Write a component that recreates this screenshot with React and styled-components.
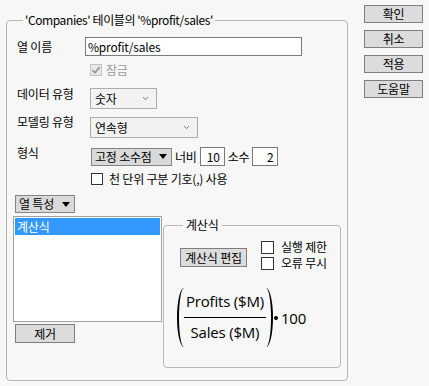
import React from 'react';
import styled, { createGlobalStyle } from 'styled-components';

const GlobalStyle = createGlobalStyle`
	html, body {
		margin: 0;
		padding: 0;
		background: #f7f7f7;
	}
	body {
		font-family: "Noto Sans CJK KR", "Noto Sans", sans-serif;
		font-size: 12px;
		letter-spacing: -0.2px;
		color: #000;
	}
`;

const Page = styled.div`
	display: flex;
	align-items: flex-start;
	width: 429px;
	height: 386px;
	padding-left: 6px;
	box-sizing: border-box;
	overflow: hidden;
`;

const GroupBox = styled.fieldset`
	box-sizing: border-box;
	width: 342px;
	min-width: 0;
	margin: 12px 0 0 0;
	padding: 9px 6px 12px 10px;
	border: 1px solid #b4b4b4;
	border-radius: 4px;
`;

const Legend = styled.legend`
	margin-left: 6px;
	padding: 0 2px;
	line-height: 16px;
	letter-spacing: -0.4px;
	white-space: nowrap;
`;

const Row = styled.div`
	display: flex;
	align-items: ${({ $center }) => ($center ? 'center' : 'flex-start')};
	margin-top: ${({ $top }) => $top || 0}px;
	padding-left: ${({ $indent }) => $indent || 0}px;
	line-height: 16px;
`;

const Label = styled.span`
	flex: none;
	width: ${({ $width }) => ($width ? `${$width}px` : 'auto')};
	line-height: 16px;
	white-space: nowrap;
	color: ${({ $muted }) => ($muted ? '#9a9a9a' : '#000')};
`;

const TextInput = styled.div`
	box-sizing: border-box;
	width: ${({ $width }) => $width}px;
	height: 19px;
	padding: 0 ${({ $right }) => ($right ? 4 : 2)}px;
	background: #fff;
	border: 1px solid #7a7a7a;
	line-height: 17px;
	text-align: ${({ $right }) => ($right ? 'right' : 'left')};
	white-space: nowrap;
`;

const Box = styled.span`
	flex: none;
	display: inline-flex;
	align-items: center;
	justify-content: center;
	box-sizing: border-box;
	width: ${({ $size }) => $size || 12}px;
	height: ${({ $size }) => $size || 12}px;
	margin: 2px ${({ $gap }) => $gap || 6}px 0 0;
	background: ${({ $disabled }) => ($disabled ? '#e8e8e8' : '#fff')};
	border: 1px solid ${({ $disabled }) => ($disabled ? '#c4c4c4' : '#333')};
`;

const Select = styled.div`
	box-sizing: border-box;
	display: flex;
	align-items: center;
	justify-content: space-between;
	width: ${({ $width }) => $width}px;
	height: 21px;
	margin-top: ${({ $top }) => $top || 0}px;
	padding: 0 7px 0 4px;
	background: #f2f2f2;
	border: 1px solid #adadad;
`;

const DropButton = styled.div`
	flex: none;
	box-sizing: border-box;
	display: flex;
	align-items: center;
	justify-content: space-between;
	width: ${({ $width }) => $width}px;
	height: 18px;
	margin-left: ${({ $left }) => $left || 0}px;
	padding: 0 4px 0 3px;
	background: #d9d9d9;
	border: 1px solid #858585;
	line-height: 16px;
	white-space: nowrap;
`;

const Triangle = styled.span`
	width: 0;
	height: 0;
	border-left: 4px solid transparent;
	border-right: 4px solid transparent;
	border-top: 5px solid #000;
`;

const PushButton = styled.div`
	flex: none;
	box-sizing: border-box;
	width: ${({ $width }) => $width}px;
	height: ${({ $height }) => $height || 18}px;
	margin-top: ${({ $top }) => $top || 0}px;
	margin-left: ${({ $left }) => $left || 0}px;
	background: #dcdcdc;
	border: 1px solid #7e7e7e;
	text-align: center;
	line-height: ${({ $height }) => ($height || 18) - 2}px;
	white-space: nowrap;
`;

const SideButtons = styled.div`
	display: flex;
	flex-direction: column;
	gap: 7px;
	margin: 5px 0 0 16px;
`;

const Controls = styled.div`
	display: flex;
	align-items: center;
	margin-top: 2px;
`;

const InlineText = styled.span`
	margin: 0 3px;
	line-height: 16px;
`;

const Bottom = styled.div`
	display: flex;
	align-items: flex-start;
	margin: 3px 0 0 -4px;
`;

const LeftColumn = styled.div`
	display: flex;
	flex-direction: column;
`;

const ListBox = styled.div`
	box-sizing: border-box;
	width: 149px;
	height: 106px;
	padding: 1px;
	background: #fff;
	border: 1px solid #a0a0a0;
`;

const ListItem = styled.div`
	height: 17px;
	padding-left: 2px;
	line-height: 17px;
	background: ${({ $selected }) => ($selected ? '#3399ff' : 'transparent')};
	color: ${({ $selected }) => ($selected ? '#fff' : '#000')};
`;

const FormulaBox = styled.fieldset`
	box-sizing: border-box;
	width: 178px;
	min-width: 0;
	margin: 2px 0 0 1px;
	padding: 7px 6px 20px 16px;
	border: 1px solid #b8b8b8;
	border-radius: 4px;
`;

const SmallLegend = styled.legend`
	margin-left: 3px;
	padding: 0 3px;
	line-height: 14px;
`;

const Options = styled.div`
	display: flex;
	flex-direction: column;
	margin-left: 14px;
`;

const Option = styled.div`
	display: flex;
	align-items: flex-start;
	height: 16px;
	line-height: 15px;
	white-space: nowrap;
`;

const Formula = styled.div`
	display: flex;
	align-items: center;
	margin: 17px 0 0 -4px;
	font-family: "Open Sans", "Noto Sans", sans-serif;
	font-size: 15px;
	letter-spacing: -0.2px;
`;

const Paren = styled.span`
	flex: none;
	box-sizing: border-box;
	width: 7px;
	height: 59px;
	border: 0 solid #000;
	border-left-width: ${({ $right }) => ($right ? 0 : 2)}px;
	border-right-width: ${({ $right }) => ($right ? 2 : 0)}px;
	border-radius: ${({ $right }) => ($right ? '0 100% 100% 0 / 0 50% 50% 0' : '100% 0 0 100% / 50% 0 0 50%')};
	margin: 0 ${({ $right }) => ($right ? 1 : 0)}px 0 ${({ $right }) => ($right ? 0 : 1)}px;
`;

const Fraction = styled.div`
	display: flex;
	flex-direction: column;
	align-items: center;
	padding: 3px 0 5px;
`;

const Term = styled.div`
	height: 20px;
	line-height: 20px;
	padding: 0 2px;
	white-space: nowrap;
`;

const Bar = styled.div`
	align-self: stretch;
	height: 1px;
	margin: 6px 0 4px;
	background: #000;
`;

const Dot = styled.span`
	width: 4px;
	height: 4px;
	margin: 0 3px 0 0;
	border-radius: 50%;
	background: #000;
`;

const Check = () => (
	<svg width="10" height="10" viewBox="0 0 10 10">
		<path d="M1.5 5.2 L4 7.6 L8.6 2.2" fill="none" stroke="#9c9c9c" strokeWidth="1.8" />
	</svg>
);

const Chevron = () => (
	<svg width="7" height="5" viewBox="0 0 7 5">
		<path d="M1 1.2 L3.5 3.6 L6 1.2" fill="none" stroke="#777" strokeWidth="1" />
	</svg>
);

const App = () => (
	<>
		<GlobalStyle />
		<Page>
			<GroupBox>
				<Legend>'Companies' 테이블의 '%profit/sales'</Legend>
				<Row $center>
					<Label $width={68}>열 이름</Label>
					<TextInput $width={217}>%profit/sales</TextInput>
				</Row>
				<Row $top={6} $indent={73}>
					<Box $disabled $gap={4}><Check /></Box>
					<Label $muted>잠금</Label>
				</Row>
				<Row $top={8}>
					<Label $width={73}>데이터 유형</Label>
					<Select $width={67} $top={2}>
						숫자
						<Chevron />
					</Select>
				</Row>
				<Row $top={5}>
					<Label $width={73}>모델링 유형</Label>
					<Select $width={108} $top={3}>
						연속형
						<Chevron />
					</Select>
				</Row>
				<Row $top={7}>
					<Label $width={74}>형식</Label>
					<Controls>
						<DropButton $width={81}>
							고정 소수점
							<Triangle />
						</DropButton>
						<InlineText>너비</InlineText>
						<TextInput $width={25} $right>10</TextInput>
						<InlineText>소수</InlineText>
						<TextInput $width={26} $right>2</TextInput>
					</Controls>
				</Row>
				<Row $top={5} $indent={74}>
					<Box />
					<Label>천 단위 구분 기호(,) 사용</Label>
				</Row>
				<Row $top={8}>
					<DropButton $width={60} $left={-2}>
						열 특성
						<Triangle />
					</DropButton>
				</Row>
				<Bottom>
					<LeftColumn>
						<ListBox>
							<ListItem $selected>계산식</ListItem>
						</ListBox>
						<PushButton $width={60} $height={19} $top={2} $left={2}>제거</PushButton>
					</LeftColumn>
					<FormulaBox>
						<SmallLegend>계산식</SmallLegend>
						<Row>
							<PushButton $width={67} $height={19} $top={9}>계산식 편집</PushButton>
							<Options>
								<Option>
									<Box $size={13} $gap={7} />
									실행 제한
								</Option>
								<Option>
									<Box $size={13} $gap={7} />
									오류 무시
								</Option>
							</Options>
						</Row>
						<Formula>
							<Paren />
							<Fraction>
								<Term>Profits ($M)</Term>
								<Bar />
								<Term>Sales ($M)</Term>
							</Fraction>
							<Paren $right />
							<Dot />
							<span>100</span>
						</Formula>
					</FormulaBox>
				</Bottom>
			</GroupBox>
			<SideButtons>
				<PushButton $width={59}>확인</PushButton>
				<PushButton $width={59}>취소</PushButton>
				<PushButton $width={59}>적용</PushButton>
				<PushButton $width={59}>도움말</PushButton>
			</SideButtons>
		</Page>
	</>
);

export default App;
